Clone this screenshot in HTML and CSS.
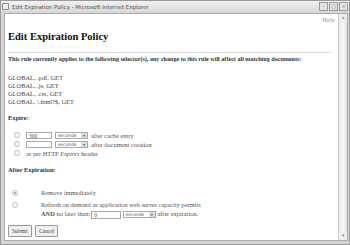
FILE: index.html
```html
<!DOCTYPE html>
<html lang="en">
  <head>
    <meta charset="UTF-8" />
    <title>Edit Expiration Policy</title>
    <link rel="stylesheet" href="styles.css">
  </head>
  <body>
    <div class="window">
      <div class="titlebar">
        <span class="app-icon"></span>
        <span class="title">Edit Expiration Policy - Microsoft Internet Explorer</span>
        <span class="win-buttons">
          <span class="wbtn">&#8211;</span>
          <span class="wbtn">&#9633;</span>
          <span class="wbtn">&#215;</span>
        </span>
      </div>
      <div class="frame">
        <div class="page">
          <div class="help">Help</div>
          <h1>Edit Expiration Policy</h1>
          <hr />
          <p class="lead">This rule currently applies to the following selector(s), any change to this rule will affect all matching documents:</p>
          <div class="selectors">
            <div>GLOBAL, .pdf, GET</div>
            <div>GLOBAL, .js, GET</div>
            <div>GLOBAL, .css, GET</div>
            <div>GLOBAL, \.html?$, GET</div>
          </div>
          <p class="label">Expire:</p>
          <div class="options">
            <div class="row">
              <span class="radio"></span>
              <span class="field">300</span>
              <span class="select">seconds<span class="arrow">&#9662;</span></span>
              <span>after cache entry</span>
            </div>
            <div class="row">
              <span class="radio"></span>
              <span class="field"></span>
              <span class="select">seconds<span class="arrow">&#9662;</span></span>
              <span>after document creation</span>
            </div>
            <div class="row">
              <span class="radio"></span>
              <span>as per HTTP <i>Expires</i> header</span>
            </div>
          </div>
          <p class="label after-label">After Expiration:</p>
          <div class="after">
            <div class="arow">
              <span class="radio checked"></span>
              <span>Remove immediately</span>
            </div>
            <div class="arow">
              <span class="radio"></span>
              <div>
                <div>Refresh on demand as application web server capacity permits</div>
                <div class="and">
                  <b>AND</b> no later than:<span class="field wide">0</span>
                  <span class="select">seconds<span class="arrow">&#9662;</span></span>
                  after expiration.
                </div>
              </div>
            </div>
          </div>
          <div class="actions">
            <span class="btn">Submit</span>
            <span class="btn">Cancel</span>
          </div>
        </div>
        <div class="scrollbar">
          <span class="sarrow">&#9652;</span>
          <span class="strack"></span>
          <span class="sarrow">&#9662;</span>
        </div>
      </div>
    </div>
  </body>
</html>
```

FILE: styles.css
```css
body {
  margin: 0;
  background: #fff;
  font-family: "Liberation Serif", serif;
  color: #333;
}
.window {
  width: 350px;
  height: 245px;
  box-sizing: border-box;
  background: #d6d6d6;
  border: 1px solid #9a9a9a;
  display: flex;
  flex-direction: column;
}
.titlebar {
  height: 11px;
  display: flex;
  align-items: center;
  gap: 3px;
  padding: 0 1px;
  background: linear-gradient(#f2f2f2, #d9d9d9);
  font-family: "DejaVu Sans", sans-serif;
  font-size: 5.5px;
  color: #555;
}
.app-icon {
  width: 5px;
  height: 5px;
  border: 1px solid #888;
  border-radius: 1px;
  background: #eee;
}
.title {
  flex: 1;
}
.win-buttons {
  display: flex;
  gap: 1px;
}
.wbtn {
  width: 7px;
  height: 7px;
  border: 1px solid #999;
  background: #e4e4e4;
  font-size: 5px;
  line-height: 7px;
  text-align: center;
  color: #777;
}
.frame {
  flex: 1;
  display: flex;
  margin: 1px 1px 3px 3px;
  border: 1px solid #aaa;
  background: #fff;
  min-height: 0;
}
.page {
  flex: 1;
  padding: 0 7px 0 3px;
  font-size: 6.4px;
  overflow: hidden;
}
.help {
  text-align: right;
  color: #999;
  font-size: 6.5px;
  margin-top: 2px;
  margin-right: -4px;
}
h1 {
  font-size: 10.5px;
  margin: 8px 0 0;
  color: #111;
}
hr {
  border: 0;
  border-top: 1px solid #ddd;
  margin: 10px 0 3px;
}
.lead {
  font-weight: bold;
  font-size: 6.1px;
  margin: 0 0 12px;
}
.selectors {
  line-height: 8px;
  color: #444;
}
.label {
  font-weight: bold;
  margin: 8px 0 10px;
}
.options {
  display: grid;
  gap: 1px;
  padding-left: 6px;
  color: #555;
}
.row {
  display: flex;
  align-items: center;
  gap: 3px;
  height: 8px;
}
.radio {
  width: 4px;
  height: 4px;
  border: 1px solid #bbb;
  border-radius: 50%;
  margin-right: 3px;
  flex: none;
}
.radio.checked {
  background: radial-gradient(#aaa 35%, #fff 45%);
}
.field {
  width: 26px;
  height: 7px;
  border: 1px solid #aaa;
  font-size: 5.5px;
  line-height: 6px;
  padding-left: 2px;
  box-sizing: border-box;
}
.field.wide {
  width: 30px;
  height: 8px;
  margin-left: 1px;
  display: inline-block;
  vertical-align: middle;
}
.select {
  display: inline-flex;
  align-items: center;
  justify-content: space-between;
  width: 33px;
  height: 7px;
  border: 1px solid #aaa;
  font-family: "DejaVu Sans", sans-serif;
  font-size: 4.5px;
  padding-left: 2px;
  box-sizing: border-box;
  vertical-align: middle;
}
.arrow {
  width: 6px;
  height: 5px;
  background: #ddd;
  font-size: 4px;
  line-height: 5px;
  text-align: center;
}
.after-label {
  margin: 9px 0 0;
}
.after {
  display: grid;
  gap: 3px;
  padding-left: 4px;
  margin-top: 15px;
  color: #555;
}
.arow {
  display: flex;
  gap: 20px;
  align-items: flex-start;
  line-height: 9px;
}
.arow .radio {
  margin-top: 2px;
}
.and {
  line-height: 10px;
}
.actions {
  display: flex;
  gap: 3px;
  margin-top: 6px;
}
.btn {
  border: 1px solid #999;
  border-radius: 1px;
  background: #f0f0f0;
  font-size: 5.5px;
  padding: 2px 3px;
  color: #444;
}
.scrollbar {
  width: 8px;
  display: flex;
  flex-direction: column;
  background: linear-gradient(90deg, #e6e6e6, #f8f8f8, #e0e0e0);
  border-left: 1px solid #ccc;
}
.sarrow {
  height: 8px;
  font-size: 5px;
  line-height: 8px;
  text-align: center;
  color: #888;
  background: #eee;
}
.strack {
  flex: 1;
}
```
